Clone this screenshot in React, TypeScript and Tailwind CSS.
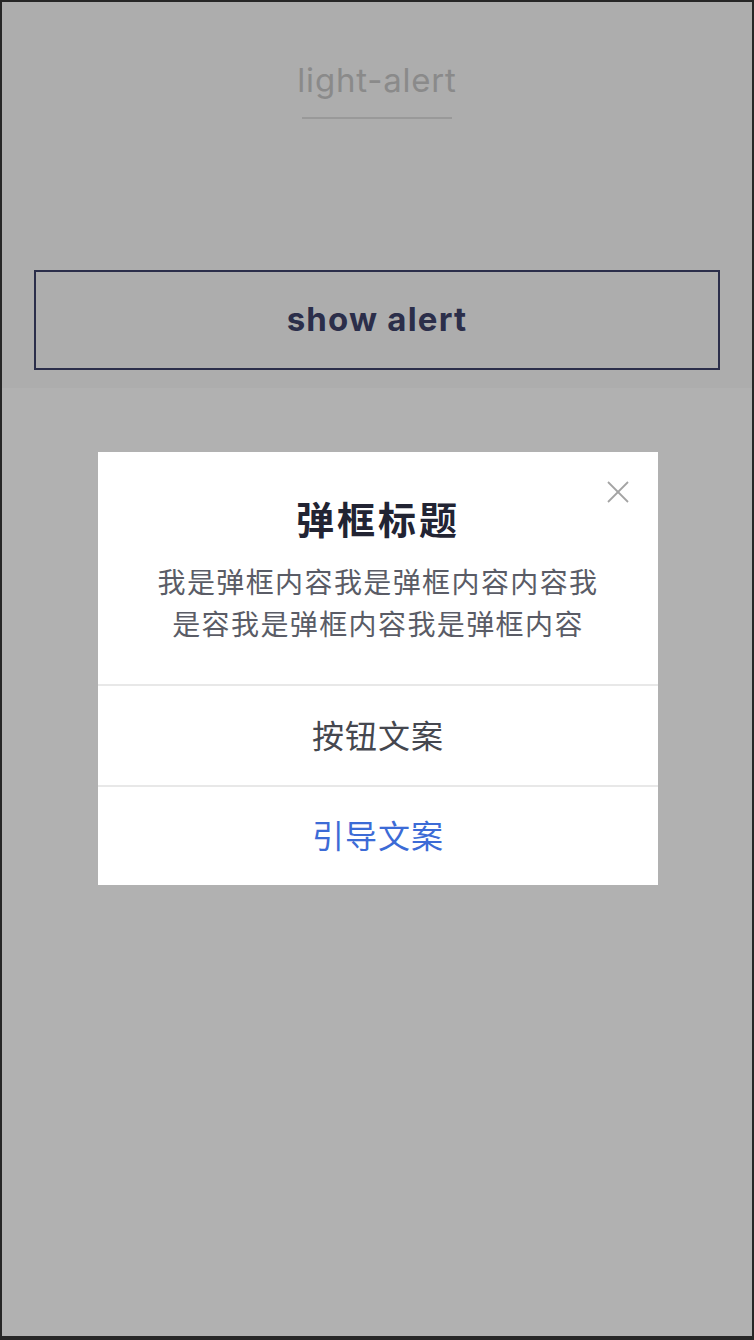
const cjk = "font-['Noto_Sans_CJK_SC',sans-serif]";

export default function App() {
    return (
        <div className="w-[754px] h-[1340px] bg-[#262626] pt-[2px] pl-[2px] pr-[2px] pb-[4px]">
            <div className="relative w-full h-full bg-[#b1b1b1] flex flex-col">
                <Header />
                <div className="flex-1" />
                <AlertDialog />
            </div>
        </div>
    )
}

function Header() {
    return (
        <div className="bg-[#adadad] h-[386px] flex flex-col items-center">
            <div className="pt-[56px] flex flex-col items-center">
                <div className="font-['Inter',sans-serif] text-[33px] leading-[44px] text-[#8a8a8a] tracking-[0.8px]">light-alert</div>
                <div className="mt-[15px] w-[150px] h-[2px] bg-[#999999]" />
            </div>
            <button className="mt-[151px] w-[686px] h-[100px] border-2 border-[#2b2e4a] flex items-center justify-center font-['Inter',sans-serif] font-bold text-[33px] text-[#2b2e4a] tracking-[1.2px]">
                show alert
            </button>
        </div>
    )
}

function CloseIcon() {
    return (
        <svg width="22" height="22" viewBox="0 0 22 22" fill="none" stroke="#a3a3a3" strokeWidth="1.8">
            <line x1="1" y1="1" x2="21" y2="21" />
            <line x1="21" y1="1" x2="1" y2="21" />
        </svg>
    )
}

function AlertDialog() {
    return (
        <div className="absolute left-[96px] top-[450px] w-[560px] bg-white">
            <button className="absolute right-[29px] top-[29px]">
                <CloseIcon />
            </button>
            <div className="pt-[42px] pb-[40px] px-[40px] flex flex-col items-center">
                <div className={`${cjk} font-bold text-[38px] leading-[48px] text-[#222433] tracking-[3px]`}>弹框标题</div>
                <div className={`${cjk} mt-[18px] text-[28px] leading-[42px] text-[#5a5c66] text-center tracking-[1.4px] w-[460px]`}>
                    我是弹框内容我是弹框内容内容我是容我是弹框内容我是弹框内容
                </div>
            </div>
            <div className="border-t-2 border-[#e8e8e8] h-[101px] pb-[4px] flex items-center justify-center">
                <span className={`${cjk} text-[32px] text-[#45474f] tracking-[1px]`}>按钮文案</span>
            </div>
            <div className="border-t-2 border-[#e8e8e8] h-[100px] pb-[5px] flex items-center justify-center">
                <span className={`${cjk} text-[32px] text-[#3c6bd6] tracking-[1px]`}>引导文案</span>
            </div>
        </div>
    )
}
